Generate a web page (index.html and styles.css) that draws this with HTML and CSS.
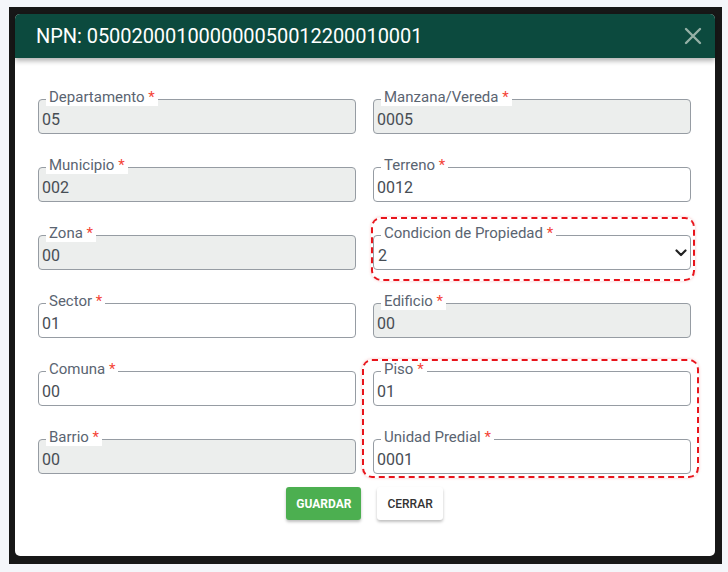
FILE: index.html
```html
<!DOCTYPE html>
<html lang="es">
<head>
  <meta charset="UTF-8" />
  <title>NPN</title>
  <link rel="stylesheet" href="styles.css">
</head>
<body>
  <div class="frame">
    <div class="modal">
      <div class="modal-header">
        <h2>NPN: 050020001000000050012200010001</h2>
        <button class="close" aria-label="Cerrar">
          <svg width="18" height="18" viewBox="0 0 18 18">
            <path d="M2 2 L16 16 M16 2 L2 16" stroke="currentColor" stroke-width="2.4" stroke-linecap="round"/>
          </svg>
        </button>
      </div>

      <div class="modal-body">
        <div class="fields">
          <div class="field">
            <label>Departamento <b>*</b></label>
            <input class="ctl" value="05" disabled>
          </div>
          <div class="field">
            <label>Manzana/Vereda <b>*</b></label>
            <input class="ctl" value="0005" disabled>
          </div>

          <div class="field">
            <label>Municipio <b>*</b></label>
            <input class="ctl" value="002" disabled>
          </div>
          <div class="field">
            <label>Terreno <b>*</b></label>
            <input class="ctl" value="0012">
          </div>

          <div class="field">
            <label>Zona <b>*</b></label>
            <input class="ctl" value="00" disabled>
          </div>
          <div class="field">
            <label>Condicion de Propiedad <b>*</b></label>
            <select class="ctl">
              <option>2</option>
            </select>
            <svg class="chevron" width="12" height="8" viewBox="0 0 12 8">
              <path d="M1.5 1.5 L6 6 L10.5 1.5" fill="none" stroke="#222" stroke-width="2.2" stroke-linecap="round" stroke-linejoin="round"/>
            </svg>
            <span class="mark mark-cond"></span>
          </div>

          <div class="field">
            <label>Sector <b>*</b></label>
            <input class="ctl" value="01">
          </div>
          <div class="field">
            <label>Edificio <b>*</b></label>
            <input class="ctl" value="00" disabled>
          </div>

          <div class="field">
            <label>Comuna <b>*</b></label>
            <input class="ctl" value="00">
          </div>
          <div class="field">
            <label>Piso <b>*</b></label>
            <input class="ctl" value="01">
            <span class="mark mark-unit"></span>
          </div>

          <div class="field">
            <label>Barrio <b>*</b></label>
            <input class="ctl" value="00" disabled>
          </div>
          <div class="field">
            <label>Unidad Predial <b>*</b></label>
            <input class="ctl" value="0001">
          </div>
        </div>

        <div class="actions">
          <button class="btn btn-save">Guardar</button>
          <button class="btn btn-close">Cerrar</button>
        </div>
      </div>
    </div>
  </div>
</body>
</html>
```

FILE: styles.css
```css
* {
  margin: 0;
  padding: 0;
  box-sizing: border-box;
}

body {
  background: #f4f6fa;
  font-family: Roboto, "Liberation Sans", sans-serif;
  padding: 7px 0 0 9px;
}

.frame {
  width: 713px;
  height: 557px;
  background: #171717;
  padding: 7px 7px 8px 6px;
}

.modal {
  width: 700px;
  height: 542px;
  background: #fff;
  border-radius: 5px;
}

/* header */
.modal-header {
  position: relative;
  z-index: 1;
  height: 44px;
  display: flex;
  align-items: center;
  justify-content: space-between;
  padding: 0 10px 0 21px;
  background: #0c4a3e;
  border-radius: 5px 5px 0 0;
  box-shadow: 0 3px 5px rgba(0, 0, 0, 0.3);
}

.modal-header h2 {
  color: #fff;
  font-size: 20px;
  font-weight: 400;
  letter-spacing: -0.05px;
}

.close {
  border: none;
  background: none;
  color: #95b0a6;
  width: 24px;
  height: 24px;
  display: flex;
  align-items: center;
  justify-content: center;
}

/* body */
.modal-body {
  padding: 41px 24px 0 23px;
}

.fields {
  display: grid;
  grid-template-columns: 318px 318px;
  column-gap: 17px;
  row-gap: 33px;
}

.field {
  position: relative;
}

.field label {
  position: absolute;
  top: -9px;
  left: 8px;
  padding: 0 3px 1px;
  background: #fff;
  color: #5a6471;
  font-size: 15px;
  line-height: 15px;
  white-space: nowrap;
}

.field label b {
  color: #f44336;
  font-weight: 400;
}

.ctl {
  display: block;
  width: 100%;
  height: 35px;
  padding: 6px 3px 0;
  border: 1px solid #969ca3;
  border-radius: 4px;
  background: #fff;
  color: #474d54;
  font-family: inherit;
  font-size: 16px;
  outline: none;
  appearance: none;
}

.ctl:disabled {
  background: #eceeed;
  color: #474d54;
}

select.ctl {
  padding-left: 4px;
}

.chevron {
  position: absolute;
  right: 4px;
  top: 14px;
}

/* red dashed annotations */
.mark {
  position: absolute;
  border: 2px dashed #e8141b;
  border-radius: 10px;
  pointer-events: none;
  box-shadow: 0 0 3px rgba(230, 20, 27, 0.25);
}

.mark-cond {
  top: -18px;
  bottom: -11px;
  left: -2px;
  right: -4px;
}

.mark-unit {
  top: -12px;
  bottom: -72px;
  left: -11px;
  right: -8px;
}

/* buttons */
.actions {
  display: flex;
  justify-content: center;
  gap: 16px;
  margin-top: 13px;
}

.btn {
  height: 33px;
  padding: 0 10px;
  border: none;
  border-radius: 3px;
  font-family: inherit;
  font-size: 12px;
  text-transform: uppercase;
  box-shadow: 0 2px 3px rgba(0, 0, 0, 0.25);
}

.btn-save {
  background: #4caf50;
  color: #fff;
  font-weight: 700;
}

.btn-close {
  background: #fff;
  color: #333;
  font-weight: 500;
}
```
